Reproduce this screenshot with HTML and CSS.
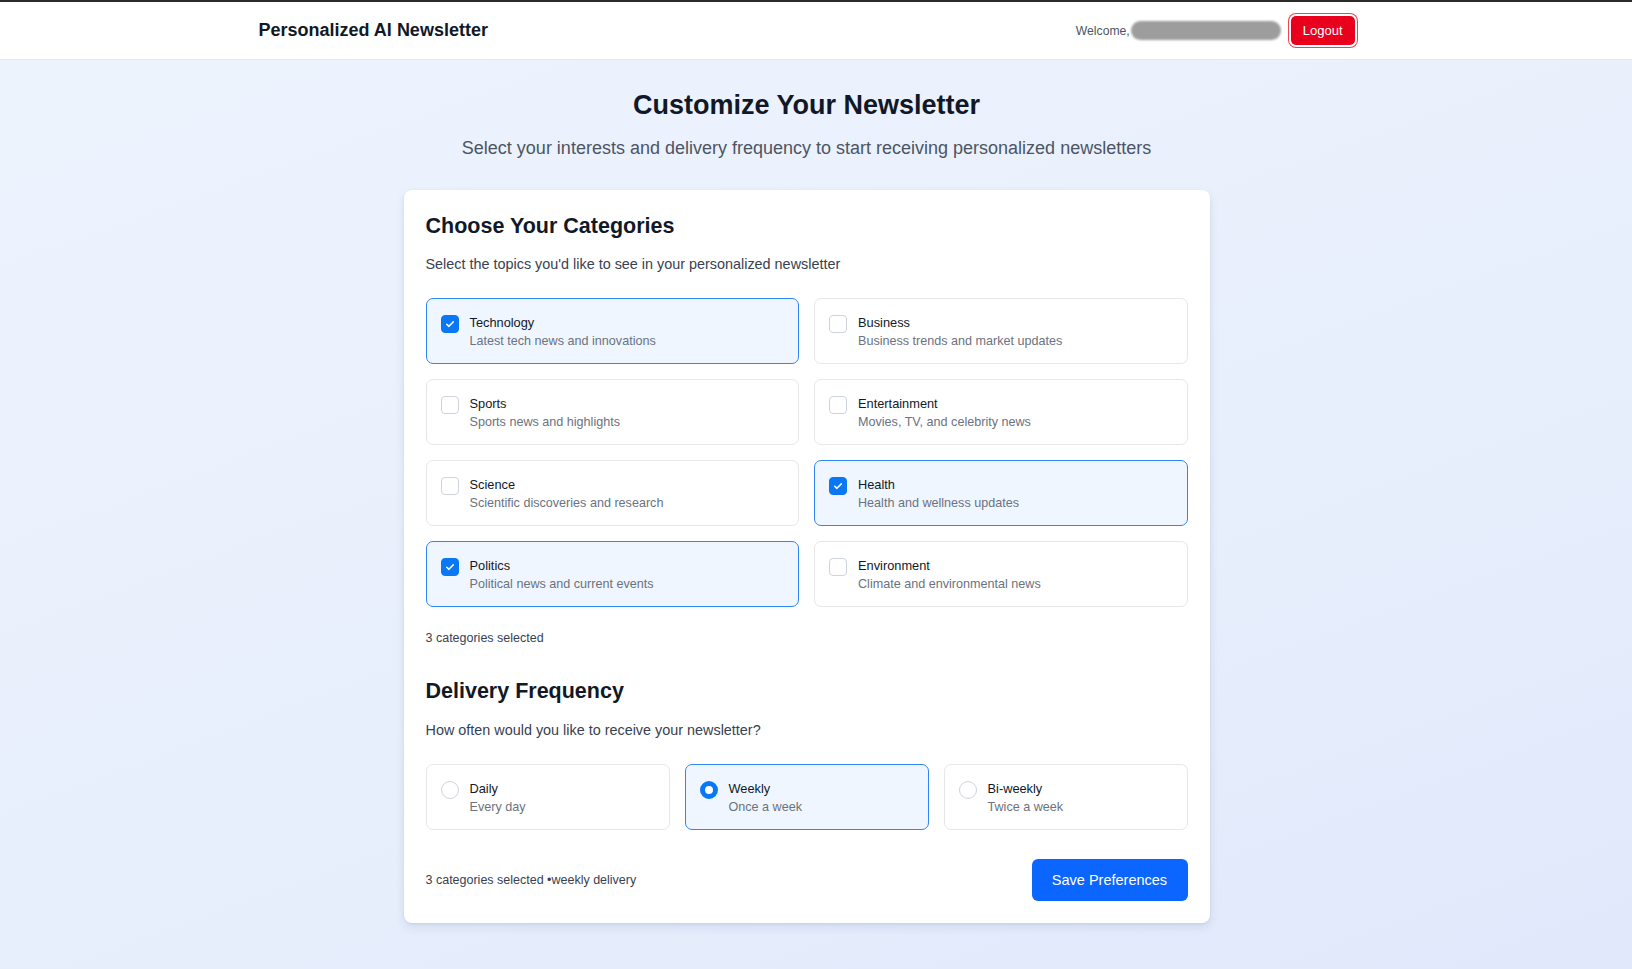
FILE: index.html
```html
<!DOCTYPE html>
<html lang="en">
<head>
<meta charset="utf-8">
<title>Personalized AI Newsletter</title>
<link rel="stylesheet" href="styles.css">
</head>
<body>
<div class="page">
  <header class="topbar">
    <div class="topbar-inner">
      <div class="brand">Personalized AI Newsletter</div>
      <div class="user">
        <span class="welcome">Welcome,</span>
        <span class="redacted"></span>
        <button class="logout">Logout</button>
      </div>
    </div>
  </header>
  <main class="main">
    <h1 class="hero-title">Customize Your Newsletter</h1>
    <p class="hero-sub">Select your interests and delivery frequency to start receiving personalized newsletters</p>
    <section class="card">
      <h2 class="section-title">Choose Your Categories</h2>
      <p class="section-sub">Select the topics you'd like to see in your personalized newsletter</p>
      <div class="cat-grid">
        <label class="option selected"><span class="check on"><svg viewBox="0 0 12 12"><path d="M3.2 6.2 5.1 8 8.8 4.2" fill="none" stroke="#fff" stroke-width="1.3" stroke-linecap="round" stroke-linejoin="round"/></svg></span><span class="opt-text"><span class="opt-title">Technology</span><span class="opt-desc">Latest tech news and innovations</span></span></label>
        <label class="option"><span class="check"></span><span class="opt-text"><span class="opt-title">Business</span><span class="opt-desc">Business trends and market updates</span></span></label>
        <label class="option"><span class="check"></span><span class="opt-text"><span class="opt-title">Sports</span><span class="opt-desc">Sports news and highlights</span></span></label>
        <label class="option"><span class="check"></span><span class="opt-text"><span class="opt-title">Entertainment</span><span class="opt-desc">Movies, TV, and celebrity news</span></span></label>
        <label class="option"><span class="check"></span><span class="opt-text"><span class="opt-title">Science</span><span class="opt-desc">Scientific discoveries and research</span></span></label>
        <label class="option selected"><span class="check on"><svg viewBox="0 0 12 12"><path d="M3.2 6.2 5.1 8 8.8 4.2" fill="none" stroke="#fff" stroke-width="1.3" stroke-linecap="round" stroke-linejoin="round"/></svg></span><span class="opt-text"><span class="opt-title">Health</span><span class="opt-desc">Health and wellness updates</span></span></label>
        <label class="option selected"><span class="check on"><svg viewBox="0 0 12 12"><path d="M3.2 6.2 5.1 8 8.8 4.2" fill="none" stroke="#fff" stroke-width="1.3" stroke-linecap="round" stroke-linejoin="round"/></svg></span><span class="opt-text"><span class="opt-title">Politics</span><span class="opt-desc">Political news and current events</span></span></label>
        <label class="option"><span class="check"></span><span class="opt-text"><span class="opt-title">Environment</span><span class="opt-desc">Climate and environmental news</span></span></label>
      </div>
      <p class="count">3 categories selected</p>
      <h2 class="section-title freq-title">Delivery Frequency</h2>
      <p class="section-sub freq-sub">How often would you like to receive your newsletter?</p>
      <div class="freq-grid">
        <label class="option"><span class="radio"></span><span class="opt-text"><span class="opt-title">Daily</span><span class="opt-desc">Every day</span></span></label>
        <label class="option selected"><span class="radio on"></span><span class="opt-text"><span class="opt-title">Weekly</span><span class="opt-desc">Once a week</span></span></label>
        <label class="option"><span class="radio"></span><span class="opt-text"><span class="opt-title">Bi-weekly</span><span class="opt-desc">Twice a week</span></span></label>
      </div>
      <div class="footer-row">
        <span class="summary">3 categories selected •weekly delivery</span>
        <button class="save">Save Preferences</button>
      </div>
    </section>
  </main>
</div>
</body>
</html>
```

FILE: styles.css
```css
* { box-sizing: border-box; }
html, body { margin: 0; padding: 0; }
body {
  font-family: "Liberation Sans", Arial, sans-serif;
  color: #111827;
  background: linear-gradient(160deg, #eef4fe 0%, #e8effc 55%, #e1e8fb 100%);
  min-height: 969px;
  border-top: 2px solid #2b2b2b;
}
.page { padding-right: 19px; }
.topbar {
  background: #fff;
  border-bottom: 1px solid #e5e7eb;
  margin-right: -19px;
  padding-right: 19px;
}
.topbar-inner {
  width: 1096px;
  margin: 0 auto;
  height: 57px;
  display: flex;
  align-items: center;
  justify-content: space-between;
}
.brand { font-size: 18px; font-weight: 700; color: #111827; }
.user { display: flex; align-items: center; }
.welcome { font-size: 12.2px; color: #4b5563; }
.redacted {
  display: inline-block;
  width: 150px;
  height: 19px;
  margin-left: 1px;
  background: #9d9d9d;
  border-radius: 10px;
  filter: blur(1px);
}
.logout {
  margin-left: 10px;
  font-family: inherit;
  font-size: 13px;
  color: #fff;
  background: #e8001c;
  border: none;
  border-radius: 5px;
  padding: 0 12px;
  height: 29px;
  box-shadow: 0 0 0 2px #fff, 0 0 0 3px #f0434f;
}
.main {
  display: flex;
  flex-direction: column;
  align-items: center;
  padding-top: 27px;
  padding-bottom: 45px;
}
.hero-title {
  margin: 0;
  font-size: 27px;
  line-height: 36px;
  font-weight: 700;
  color: #111827;
}
.hero-sub {
  margin: 12px 0 0;
  font-size: 18px;
  line-height: 26px;
  color: #4b5563;
}
.card {
  margin-top: 29px;
  width: 806px;
  background: #fff;
  border-radius: 8px;
  box-shadow: 0 4px 10px rgba(60, 80, 140, 0.12), 0 1px 3px rgba(0,0,0,0.06);
  padding: 21px 22px 22px;
}
.section-title {
  margin: 0;
  font-size: 21.5px;
  line-height: 30px;
  font-weight: 700;
  color: #111827;
}
.section-sub {
  margin: 13px 0 0;
  font-size: 14.4px;
  line-height: 20px;
  color: #374151;
}
.freq-sub { margin-top: 14px; }
.cat-grid {
  margin-top: 24px;
  display: grid;
  grid-template-columns: 1fr 1fr;
  gap: 15px;
}
.freq-grid {
  margin-top: 24px;
  display: grid;
  grid-template-columns: 1fr 1fr 1fr;
  gap: 15px;
}
.option {
  display: flex;
  align-items: flex-start;
  height: 66px;
  padding: 15px 14px;
  border: 1px solid #e5e7eb;
  border-radius: 7px;
  background: #fff;
}
.option.selected {
  border-color: #2f86f6;
  background: #eff6ff;
}
.check {
  flex: none;
  width: 18px;
  height: 18px;
  border: 1px solid #cfd4dc;
  border-radius: 4px;
  background: #fff;
  margin-top: 1px;
  display: flex;
  align-items: center;
  justify-content: center;
}
.check.on { background: #0a78f5; border-color: #0a78f5; }
.check svg { width: 14px; height: 14px; }
.radio {
  flex: none;
  width: 18px;
  height: 18px;
  border: 1px solid #cfd4dc;
  border-radius: 50%;
  background: #fff;
  margin-top: 1px;
}
.radio.on { border: 5px solid #0a78f5; }
.opt-text {
  display: flex;
  flex-direction: column;
  margin-left: 11px;
}
.opt-title { font-size: 12.8px; line-height: 18px; color: #111827; }
.opt-desc { font-size: 12.6px; line-height: 18px; color: #6b7280; }
.count {
  margin: 22px 0 0;
  font-size: 12.5px;
  line-height: 18px;
  color: #374151;
}
.freq-title { margin-top: 29px; }
.footer-row {
  margin-top: 29px;
  display: flex;
  align-items: center;
  justify-content: space-between;
}
.summary { font-size: 12.5px; color: #374151; }
.save {
  font-family: inherit;
  font-size: 14.5px;
  color: #fff;
  background: #0a66ff;
  border: none;
  border-radius: 6px;
  width: 156px;
  height: 42px;
}
```
